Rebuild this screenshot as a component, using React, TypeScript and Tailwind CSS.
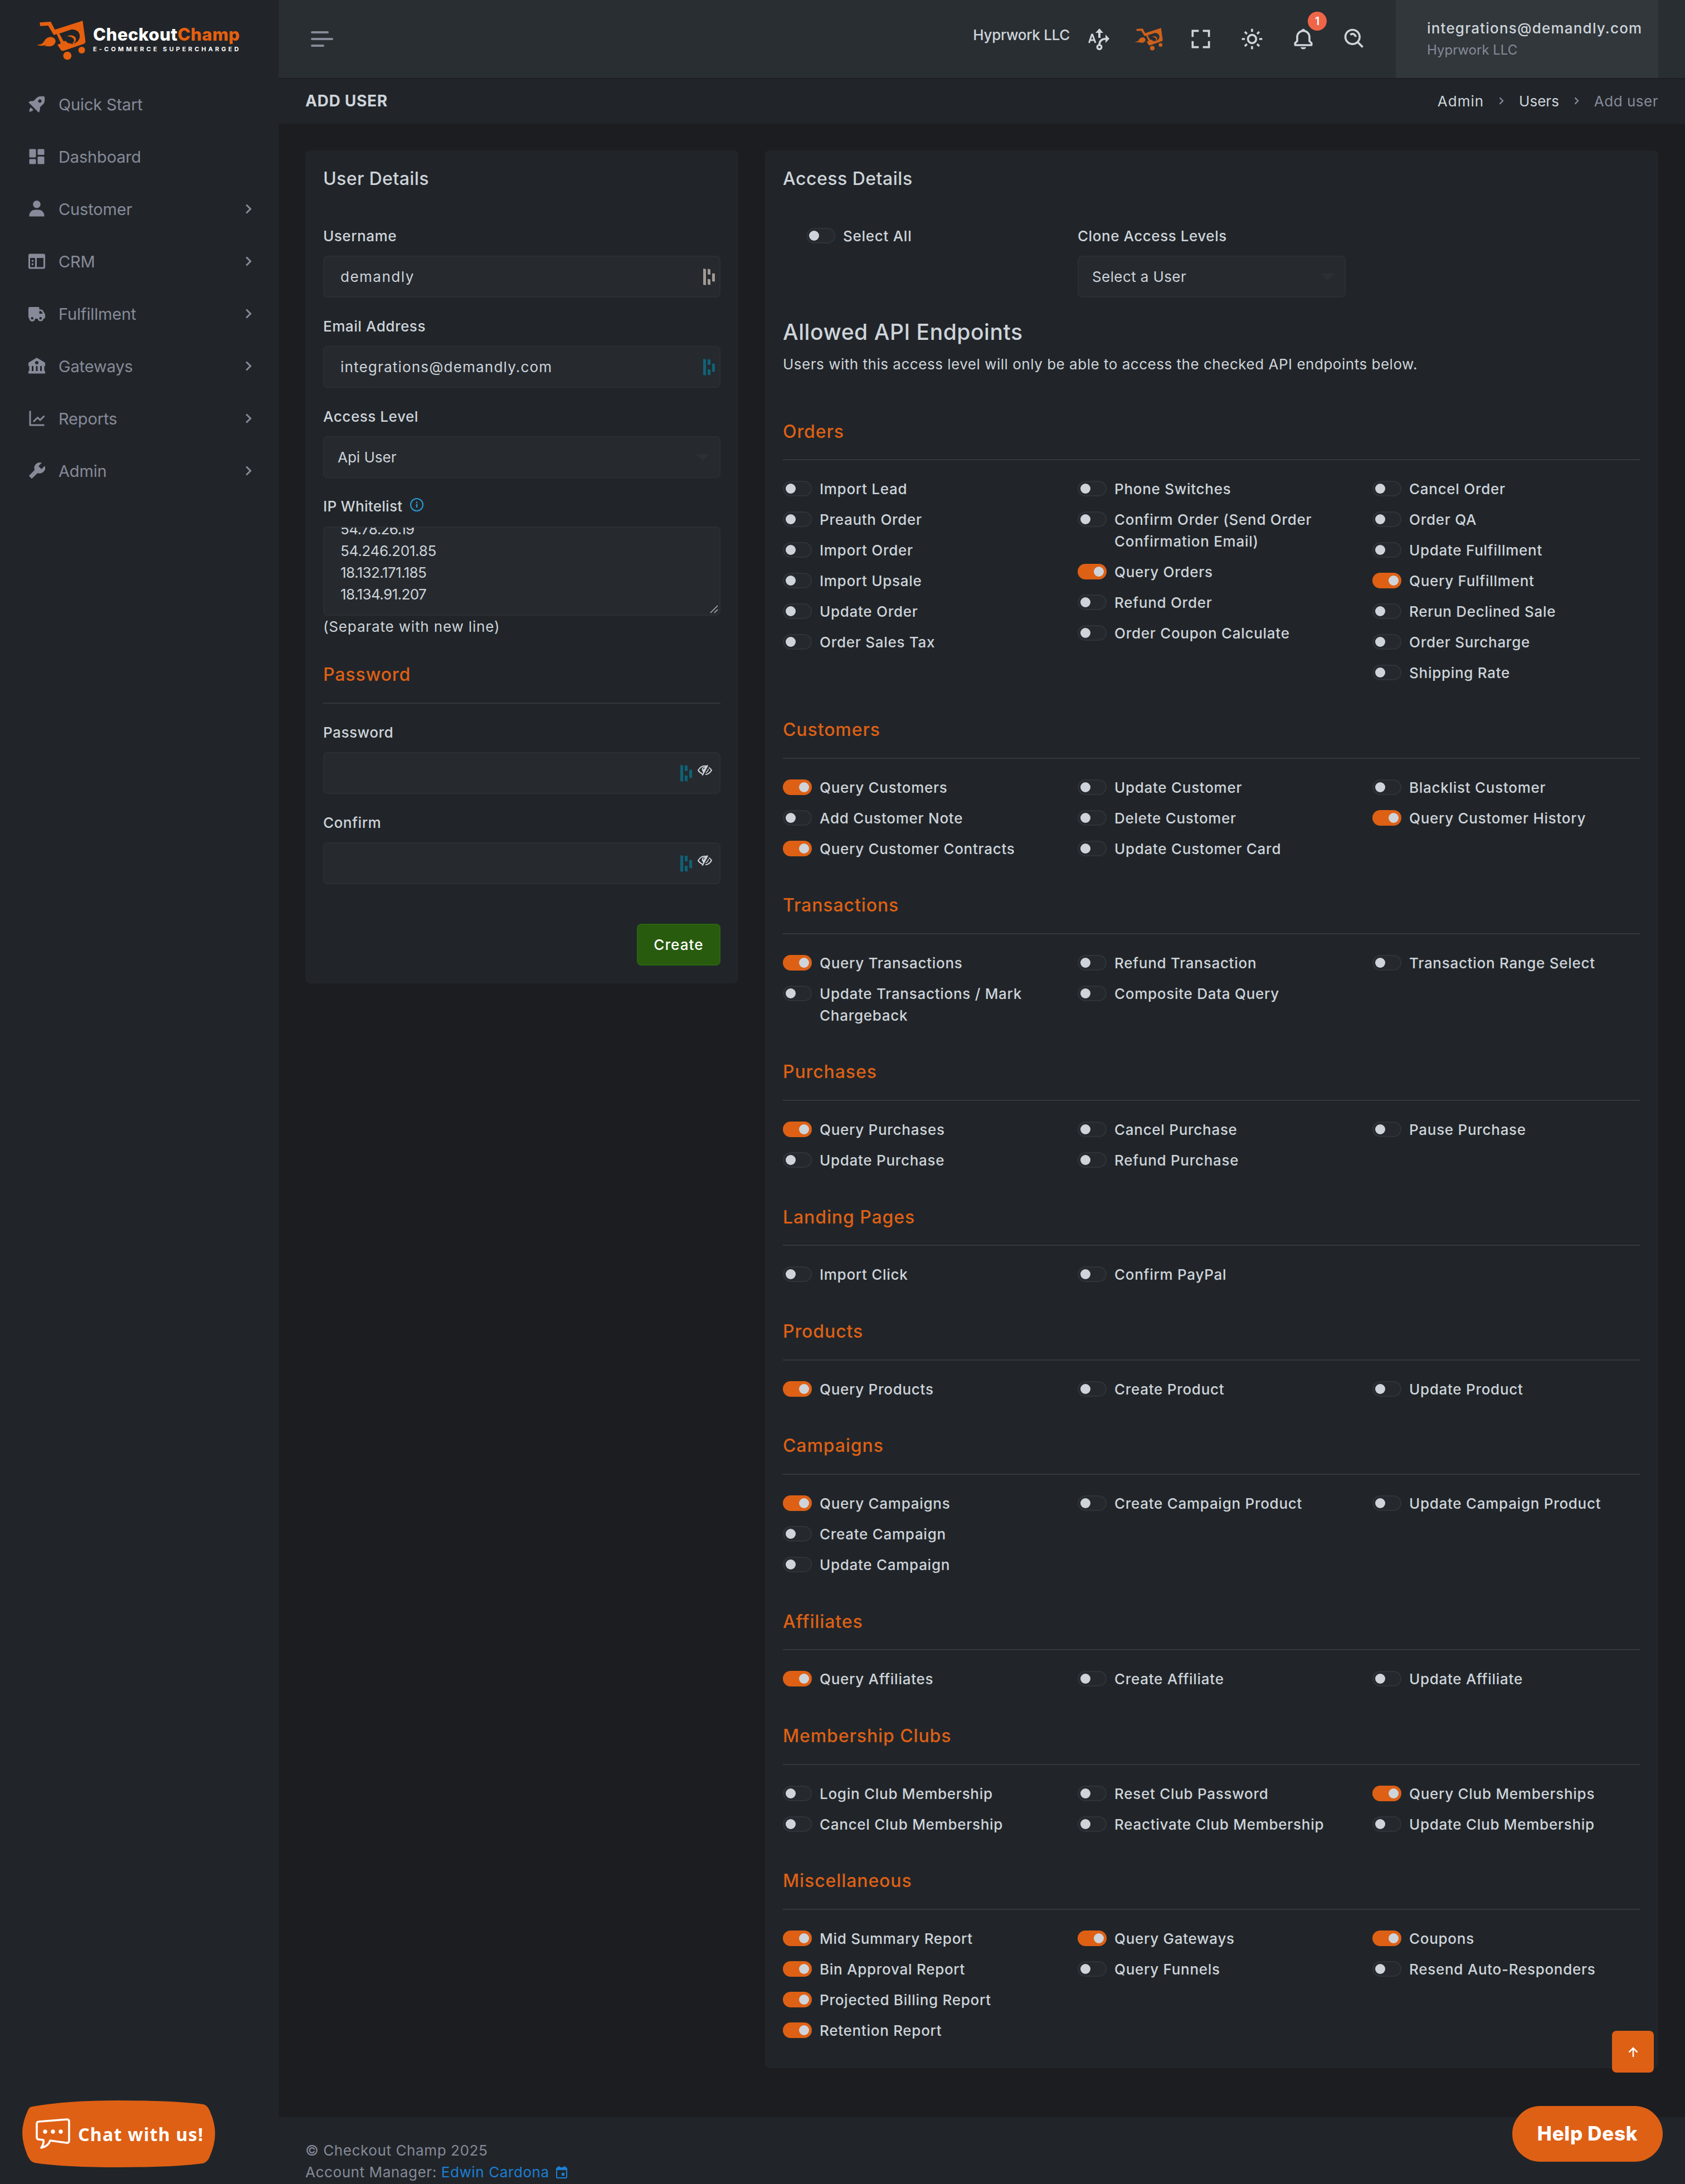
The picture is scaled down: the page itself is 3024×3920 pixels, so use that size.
import type { ReactNode } from 'react'
import {
  BiBell,
  BiFullscreen,
  BiLineChart,
  BiSearchAlt,
  BiSolidBank,
  BiSolidDashboard,
  BiSolidRocket,
  BiSolidTruck,
  BiSolidUser,
  BiSolidWrench,
  BiSun
} from 'react-icons/bi'

type Option = [label: string, on?: boolean]

interface Section {
  title: string
  columns: Option[][]
}

const sections: Section[] = [
  {
    title: 'Orders',
    columns: [
      [['Import Lead'], ['Preauth Order'], ['Import Order'], ['Import Upsale'], ['Update Order'], ['Order Sales Tax']],
      [
        ['Phone Switches'],
        ['Confirm Order (Send Order\nConfirmation Email)'],
        ['Query Orders', true],
        ['Refund Order'],
        ['Order Coupon Calculate']
      ],
      [
        ['Cancel Order'],
        ['Order QA'],
        ['Update Fulfillment'],
        ['Query Fulfillment', true],
        ['Rerun Declined Sale'],
        ['Order Surcharge'],
        ['Shipping Rate']
      ]
    ]
  },
  {
    title: 'Customers',
    columns: [
      [['Query Customers', true], ['Add Customer Note'], ['Query Customer Contracts', true]],
      [['Update Customer'], ['Delete Customer'], ['Update Customer Card']],
      [['Blacklist Customer'], ['Query Customer History', true]]
    ]
  },
  {
    title: 'Transactions',
    columns: [
      [['Query Transactions', true], ['Update Transactions / Mark\nChargeback']],
      [['Refund Transaction'], ['Composite Data Query']],
      [['Transaction Range Select']]
    ]
  },
  {
    title: 'Purchases',
    columns: [
      [['Query Purchases', true], ['Update Purchase']],
      [['Cancel Purchase'], ['Refund Purchase']],
      [['Pause Purchase']]
    ]
  },
  { title: 'Landing Pages', columns: [[['Import Click']], [['Confirm PayPal']], []] },
  { title: 'Products', columns: [[['Query Products', true]], [['Create Product']], [['Update Product']]] },
  {
    title: 'Campaigns',
    columns: [
      [['Query Campaigns', true], ['Create Campaign'], ['Update Campaign']],
      [['Create Campaign Product']],
      [['Update Campaign Product']]
    ]
  },
  { title: 'Affiliates', columns: [[['Query Affiliates', true]], [['Create Affiliate']], [['Update Affiliate']]] },
  {
    title: 'Membership Clubs',
    columns: [
      [['Login Club Membership'], ['Cancel Club Membership']],
      [['Reset Club Password'], ['Reactivate Club Membership']],
      [['Query Club Memberships', true], ['Update Club Membership']]
    ]
  },
  {
    title: 'Miscellaneous',
    columns: [
      [
        ['Mid Summary Report', true],
        ['Bin Approval Report', true],
        ['Projected Billing Report', true],
        ['Retention Report', true]
      ],
      [['Query Gateways', true], ['Query Funnels']],
      [['Coupons', true], ['Resend Auto-Responders']]
    ]
  }
]

const Cart = ({ className }: { className: string }) => (
  <svg viewBox="80 50 260 213" className={className} fill="currentColor" preserveAspectRatio="none">
    <path
      fillRule="evenodd"
      d="M93 60 152 56 174 99 323 51 338 160Q339 171 329 175L222 212Q210 216 204 205L188 180 206 172 184 123 168 127 138 77 95 79ZM198 120 221 162 231 159 243 170 270 176Q306 164 308 135 306 98 264 97Z"
    />
    <path d="M238 135Q262 121 282 137 296 154 274 175 263 172 276 164 281 148 264 139 252 133 238 135Z" />
    <path d="M82 178Q104 182 116 162 128 138 155 138 179 145 178 164 170 188 145 189L118 187 132 180Q108 189 82 183Z" />
    <circle cx="241" cy="239" r="22" />
    <circle cx="318" cy="209" r="18" />
  </svg>
)

const CrmIcon = () => (
  <svg viewBox="0 0 24 24" className="size-9" fill="currentColor">
    <path
      fillRule="evenodd"
      d="M4 3h16a2 2 0 0 1 2 2v14a2 2 0 0 1-2 2H4a2 2 0 0 1-2-2V5a2 2 0 0 1 2-2Zm0 5v11h6V8Zm8 0v11h8V8Z"
    />
    <path d="M6 10.5h2v2H6zM6 14.500h2v2H6z" />
  </svg>
)

const RouteIcon = () => (
  <svg viewBox="0 0 38 39" className="h-[39px] w-[38px]" fill="none" stroke="currentColor">
    <path d="M1.500 26 6.500 11h1L13 26M3.500 21h8" strokeWidth="3" />
    <path d="M20 17V6" strokeWidth="4" />
    <path d="M13 8 20 0 27 8Z" fill="currentColor" stroke="none" />
    <path d="M20 29C20 22 24 19 32 18.500" strokeWidth="3.500" />
    <path d="M31 11 38 18.500 31 26Z" fill="currentColor" stroke="none" />
    <circle cx="20" cy="33.500" r="3.800" strokeWidth="3.400" />
  </svg>
)

const Chevron = ({ className }: { className: string }) => (
  <svg viewBox="0 0 12 18" className={className} fill="none" stroke="currentColor" strokeWidth="3">
    <path d="m2 1.500 7.500 7.500L2 16.500" />
  </svg>
)

const Bars = ({ className }: { className: string }) => (
  <svg viewBox="0 0 21 30" className={className} fill="currentColor">
    <path d="M0 0 5 1V30L0 29ZM8 .500 13 1.500V11L8 10.500ZM8 18.500 13 19.500V29.500L8 28.500ZM16 8.500 21 9V23.500L16 23Z" />
  </svg>
)

const EyeOff = () => (
  <svg viewBox="0 0 26 19" className="h-[19px] w-[26px]" fill="none" stroke="currentColor" strokeWidth="2">
    <path d="M8 15.500C4.500 14 2 11.500 1 9.500 4 4.500 8 1.800 13 1.800Q14.500 1.800 16 2.200" />
    <path d="M20 4.500Q23.500 6.500 25 9.500C22 14.500 18.500 17 14 17" />
    <path d="M16.500 0 19 1 9.500 19 7 18Q9 15 10 13 6.500 9 8 6 10 3 15 3Z" fill="currentColor" stroke="none" />
    <path d="M10 8Q10.500 6 12.500 5.500" stroke="#262a2f" strokeWidth="1.300" />
    <path d="M19 7Q19.500 11 14.500 13.500" strokeWidth="1.600" />
  </svg>
)

const Switch = ({ on }: { on?: boolean }) => (
  <span
    className={
      on
        ? 'mt-[5px] flex h-7 w-[52px] shrink-0 items-center justify-end rounded-full bg-[#de6015] px-[5px]'
        : 'mt-[5px] flex h-7 w-[52px] shrink-0 items-center rounded-full border-2 border-[#2f343a] bg-[#25292e] px-[3px]'
    }
  >
    <span className="size-[18px] rounded-full bg-[#ced4da]" />
  </span>
)

const Toggle = ({ label, on }: { label: string; on?: boolean }) => (
  <div className="mb-4 flex gap-[14px]">
    <Switch on={on} />
    <span className="font-medium tracking-[0.72px] whitespace-pre">{label}</span>
  </div>
)

const Field = ({ label, children }: { label: ReactNode; children: ReactNode }) => (
  <div className="mb-8">
    <div className="mb-4 flex h-[39px] items-center pb-px font-medium tracking-[0.55px]">{label}</div>
    {children}
  </div>
)

const Box = ({ children }: { children?: ReactNode }) => (
  <div className="flex h-[75px] items-center justify-between rounded-lg border-2 border-[#2a2f34] bg-[#262a2f]">
    {children}
  </div>
)

const Caret = () => (
  <svg viewBox="0 0 24 12" className="mr-[18px] h-3 w-6 text-[#2b3035]" fill="currentColor">
    <path d="M0 0h24L12 12Z" />
  </svg>
)

const Heading = ({ children }: { children: ReactNode }) => (
  <h5 className="flex h-10 items-center text-[32px] font-medium tracking-[0.9px] text-[#de6015]">{children}</h5>
)

const menu = [
  { label: 'Quick Start', icon: <BiSolidRocket />, leaf: true },
  { label: 'Dashboard', icon: <BiSolidDashboard />, leaf: true },
  { label: 'Customer', icon: <BiSolidUser /> },
  { label: 'CRM', icon: <CrmIcon /> },
  { label: 'Fulfillment', icon: <BiSolidTruck /> },
  { label: 'Gateways', icon: <BiSolidBank /> },
  { label: 'Reports', icon: <BiLineChart /> },
  { label: 'Admin', icon: <BiSolidWrench /> }
]

const Sidebar = () => (
  <aside className="relative w-[500px] shrink-0 bg-[#212529]">
    <div className="flex h-[140px] pt-[37px] pl-[67px]">
      <Cart className="h-[71px] w-[87px] text-[#e6600f]" />
      <div className="pt-[6px] pl-[13px]">
        <div className="text-[31px] leading-[38px] font-extrabold tracking-[0.45px] text-white">
          Checkout<span className="text-[#e6600f]">Champ</span>
        </div>
        <div className="text-[11px] leading-[14px] font-bold tracking-[4.1px] text-white">E-COMMERCE SUPERCHARGED</div>
      </div>
    </div>
    <nav className="text-[29px] tracking-[-0.15px] text-[#878a99]">
      {menu.map(item => (
        <a key={item.label} className="flex h-[94px] items-center pr-12 pl-12">
          <span className="mr-[21px] text-[36px]">{item.icon}</span>
          <span className="flex-1">{item.label}</span>
          {!item.leaf && <Chevron className="h-[18px] w-3" />}
        </a>
      ))}
    </nav>
  </aside>
)

const Topbar = () => (
  <header className="flex h-[142px] items-center border-b-2 border-[#1e2023] bg-[#292e32] pr-12 pl-[58px] text-[#ced4da]">
    <div className="flex flex-1 flex-col gap-2 text-[#878a99]">
      <span className="h-1 w-8 rounded-sm bg-current" />
      <span className="h-1 w-10 rounded-sm bg-current" />
      <span className="h-1 w-6 rounded-sm bg-current" />
    </div>
    <span className="mr-[33px] -mt-4 font-medium tracking-[-0.3px]">Hyprwork LLC</span>
    <RouteIcon />
    <Cart className="mr-[46px] ml-[46px] h-[41px] w-[50px] text-[#cd611c]" />
    <div className="flex gap-12 text-[44px]">
      <BiFullscreen />
      <BiSun />
      <div className="relative">
        <BiBell />
        <span className="absolute -top-[27px] left-[30px] flex size-[34px] items-center justify-center rounded-full bg-[#f06548] text-[20px] font-semibold text-white">
          1
        </span>
      </div>
      <BiSearchAlt />
    </div>
    <div className="ml-[52px] flex h-[140px] w-[471px] flex-col bg-[#31373b] pt-[31px] pl-14">
      <span className="leading-[39px] font-medium tracking-[1.2px]">integrations@demandly.com</span>
      <span className="text-[24px] leading-[39px] text-[#878a99]">Hyprwork LLC</span>
    </div>
  </header>
)

const UserDetails = () => (
  <section className="h-[1495px] w-[777px] shrink-0 rounded-lg bg-[#212529] px-8">
    <h4 className="flex h-[134px] items-center pb-[34px] text-[32px] font-medium tracking-[0.4px]">User Details</h4>
    <Field label="Username">
      <Box>
        <span className="pl-[29px] tracking-[1.5px]">demandly</span>
        <Bars className="mr-2 h-[30px] w-[21px] text-[#a09a93]" />
      </Box>
    </Field>
    <Field label="Email Address">
      <Box>
        <span className="pl-[29px] tracking-[1.2px]">integrations@demandly.com</span>
        <Bars className="mr-2 h-[30px] w-[21px] text-[#0e6378]" />
      </Box>
    </Field>
    <Field label="Access Level">
      <Box>
        <span className="pl-6">Api User</span>
        <Caret />
      </Box>
    </Field>
    <div className="mb-4 flex h-[39px] items-center pb-0.5 font-medium tracking-[0.3px]">
      IP Whitelist
      <svg viewBox="0 0 24 24" className="mb-1.5 ml-3.5 size-6 text-[#299cdb]" fill="none" stroke="currentColor">
        <circle cx="12" cy="12" r="11" strokeWidth="2" />
        <path d="M12 10.500V17M12 6.500V9" strokeWidth="2.400" />
      </svg>
    </div>
    <div className="flex h-40 items-end justify-between overflow-hidden rounded-lg border-2 border-[#2a2f34] bg-[#262a2f]">
      <div className="pb-[17px] pl-[29px] tracking-[-0.6px]">
        <div>54.78.26.19</div>
        <div className="tracking-[-0.3px]">54.246.201.85</div>
        <div>18.132.171.185</div>
        <div>18.134.91.207</div>
      </div>
      <svg viewBox="0 0 16 16" className="mr-px mb-px size-4" fill="none" stroke="#b5b9bd" strokeWidth="1.500">
        <path d="M1 14 14 1M8 14l6-6" />
      </svg>
    </div>
    <div className="tracking-[0.85px]">(Separate with new line)</div>
    <div className="mt-[46px] mb-8 border-b-2 border-[#32383e] pb-[31px]">
      <Heading>Password</Heading>
    </div>
    {['Password', 'Confirm'].map(label => (
      <Field key={label} label={label}>
        <Box>
          <span />
          <div className="mr-[13px] flex gap-2.5">
            <Bars className="h-[30px] w-[21px] text-[#0e6378]" />
            <EyeOff />
          </div>
        </Box>
      </Field>
    ))}
    <div className="flex justify-end pt-[39px]">
      <button className="h-[75px] w-[150px] rounded-lg border-2 border-[#2a6410] bg-[#285b0e] font-medium tracking-[1.1px] text-white">
        Create
      </button>
    </div>
  </section>
)

const AccessDetails = () => (
  <section className="h-[3442px] flex-1 rounded-lg bg-[#212529] px-8">
    <h4 className="flex h-[134px] items-center pb-[34px] text-[32px] font-medium tracking-[0.5px]">Access Details</h4>
    <div className="grid h-[162px] grid-cols-3 gap-12">
      <div className="pl-[42px]">
        <Toggle label="Select All" />
      </div>
      <Field label="Clone Access Levels">
        <Box>
          <span className="pl-6 tracking-[0.4px]">Select a User</span>
          <Caret />
        </Box>
      </Field>
    </div>
    <h3 className="pt-[6px] text-[39px] leading-[48px] font-medium tracking-[0.55px]">Allowed API Endpoints</h3>
    <p className="mt-[14px] mb-[35px] tracking-[0.52px]">
      Users with this access level will only be able to access the checked API endpoints below.
    </p>
    {sections.map(section => (
      <div key={section.title}>
        <div className="border-b-2 border-[#32383e] pt-[46px] pb-[30.3px]">
          <Heading>{section.title}</Heading>
        </div>
        <div className="grid grid-cols-3 gap-12 pt-8">
          {section.columns.map((column, i) => (
            <div key={i}>
              {column.map(([label, on]) => (
                <Toggle key={label} label={label} on={on} />
              ))}
            </div>
          ))}
        </div>
      </div>
    ))}
  </section>
)

const ChatButton = () => (
  <div className="absolute bottom-[30px] left-10 flex h-[120px] w-[346px] items-center">
    <svg viewBox="0 0 346 120" className="absolute inset-0" fill="#de6015">
      <path d="M18 11Q80 0 173 0T325 7Q333 9 337 20 346 40 346 60T335 104Q331 111 324 113 270 120 173 120T22 112Q14 110 9 98 0 76 0 58T10 18Q12 12 18 11Z" />
    </svg>
    <svg viewBox="0 0 63 56" className="relative ml-6 h-14 w-[63px]" fill="none" stroke="#fff" strokeWidth="3.600">
      <path
        d="M6 6 56 2Q60 2 60 6V40Q60 45 55 44L26 40Q23 50 10 53 15 46 14 39L6 38Q2 38 2 34V10Q2 6 6 6Z"
        strokeLinejoin="round"
      />
      <g fill="#fff" stroke="none">
        <circle cx="17" cy="24" r="3.700" />
        <circle cx="31" cy="24" r="3.700" />
        <circle cx="45" cy="24" r="3.700" />
      </g>
    </svg>
    <span className="relative ml-[13px] font-['Noto_Sans',sans-serif] text-[32px] font-bold tracking-[1.3px] whitespace-nowrap text-white">
      Chat with us!
    </span>
  </div>
)

const App = () => (
  <div className="relative flex h-[3920px] w-[3024px] overflow-hidden bg-[#1c1d20] font-['Inter',sans-serif] text-[26px] leading-[39px] text-[#ced4da]">
    <Sidebar />
    <div className="flex flex-1 flex-col">
      <Topbar />
      <div className="flex h-20 items-center justify-between bg-[#212529] px-12 pb-0.5">
        <h4 className="text-[28px] font-bold tracking-[0.7px]">ADD USER</h4>
        <div className="flex items-center">
          <span className="tracking-[1px]">Admin</span>
          <Chevron className="mx-[27px] h-[14px] w-[9px] text-[#878a99]" />
          Users
          <Chevron className="mx-[27px] h-[14px] w-[9px] text-[#878a99]" />
          <span className="tracking-[0.5px] text-[#878a99]">Add user</span>
        </div>
      </div>
      <main className="flex flex-1 items-start gap-12 p-12">
        <UserDetails />
        <AccessDetails />
      </main>
      <footer className="h-[120px] bg-[#212529] px-12 pt-10 tracking-[0.6px] text-[#878a99]">
        <div>© Checkout Champ 2025</div>
        <div className="flex items-center">
          Account Manager:&nbsp;<span className="text-[#1c7fd6]">Edwin Cardona</span>
          <svg viewBox="0 0 20 22" className="ml-3 h-[22px] w-5 text-[#1c7fd6]" fill="none" stroke="currentColor">
            <rect x="1" y="3" width="18" height="18" rx="1.500" strokeWidth="2" />
            <path d="M1 5.500h18M5 0v4M15 0v4" strokeWidth="3" />
            <path d="M10 12h5v5h-5z" fill="currentColor" stroke="none" />
          </svg>
        </div>
      </footer>
    </div>
    <ChatButton />
    <div className="absolute right-14 bottom-[200px] flex size-[75px] items-center justify-center rounded-lg bg-[#de6015]">
      <svg viewBox="0 0 18 18" className="size-[18px]" fill="none" stroke="#fff" strokeWidth="2.500">
        <path d="M9 18V2M1.500 9.500 9 2l7.500 7.500" />
      </svg>
    </div>
    <div className="absolute right-10 bottom-10 flex h-[100px] w-[270px] items-center justify-center rounded-full bg-[#de6015] pb-0.5 text-[35px] font-extrabold tracking-[0.7px] text-white">
      Help Desk
    </div>
  </div>
)

export default App
